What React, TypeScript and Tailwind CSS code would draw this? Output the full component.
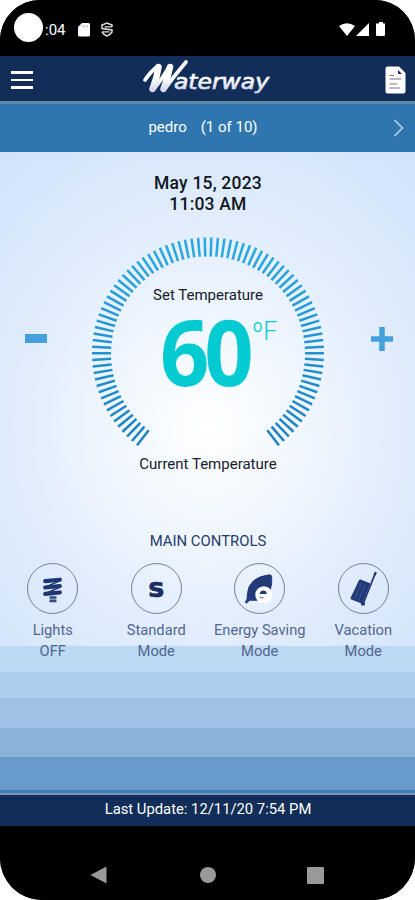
import { ReactNode } from "react"

interface IControl {
  label: string
  value: string
  icon: ReactNode
}

const TICKS = 88
const START = -142.3
const SWEEP = 284.6

const Logo = () => (
  <svg width="134" height="44" viewBox="0 0 134 44">
    <defs>
      <linearGradient id="chrome" x1="0" y1="4" x2="0" y2="38" gradientUnits="userSpaceOnUse">
        <stop offset="0" stopColor="#ffffff" />
        <stop offset="0.55" stopColor="#ffffff" />
        <stop offset="1" stopColor="#c3c8e6" />
      </linearGradient>
    </defs>
    <g fill="none" stroke="url(#chrome)" strokeLinecap="round" strokeLinejoin="round">
      <path d="M4 24Q10 15 17 10M13 33Q22 22 28 11M24 33Q33 20 45 6" strokeWidth="3.8" />
      <path d="M17.500 11Q16 22 11.500 33M29 11Q27 22 22.500 33" strokeWidth="6.500" />
    </g>
    <text
      x="33"
      y="33"
      textLength="95"
      lengthAdjust="spacingAndGlyphs"
      fill="url(#chrome)"
      stroke="url(#chrome)"
      strokeWidth="0.7"
      fontSize="21.5"
      fontStyle="italic"
      fontFamily="DejaVu Sans, sans-serif"
    >
      aterway
    </text>
  </svg>
)

const StatusBar = () => (
  <div className="flex h-[56px] items-start justify-between bg-black pl-[14px] pr-[28px] pt-[13px]">
    <div className="flex items-start">
      <div className="h-[29px] w-[29px] rounded-full bg-white"></div>
      <span className="ml-[2px] mt-[7px] text-[15px] leading-[20px] text-white">:04</span>
      <svg className="ml-[12px] mt-[10px]" width="12" height="14" viewBox="0 0 12 14">
        <path d="M4 0H10.5Q12 0 12 1.5V12Q12 13.5 10.5 13.5H1.5Q0 13.5 0 12V4Z" fill="#fff" />
        <path d="M4.5 2V4.5M6.8 2V4.5M9.2 2V4.5" stroke="#999" strokeWidth="0.7" />
      </svg>
      <svg className="ml-[11px] mt-[9px]" width="12" height="15" viewBox="0 0 12 15">
        <path d="M11 5V3L6 1L1 3V6.500L11 8V10Q9 13 6 14Q3 13 1 10" fill="none" stroke="#ddd" strokeWidth="1.500" />
        <path d="M3.500 4.800H11M1 9.800H8.500" stroke="#ddd" strokeWidth="1.200" />
      </svg>
    </div>
    <svg className="mt-[9px]" width="48" height="15" viewBox="0 0 48 15">
      <g fill="#fff">
        <path d="M0 4Q8 -1.500 16 4L8 14Z" />
        <path d="M17 14L30 1V14Z" />
        <path d="M40 0H44V1.500H46V13Q46 14 45 14H38Q37 14 37 13V1.500H40Z" />
      </g>
    </svg>
  </div>
)

const Header = () => (
  <div className="flex h-[45px] items-center justify-between bg-[#122d57] pl-[11px] pr-[9px] pt-[3px]">
    <div className="flex w-[22px] flex-col gap-[5px]">
      <div className="h-[2.5px] bg-white"></div>
      <div className="h-[2.5px] bg-white"></div>
      <div className="h-[2.5px] bg-white"></div>
    </div>
    <div className="-mt-[4px] mr-[2px]">
      <Logo />
    </div>
    <svg width="21" height="28" viewBox="0 0 21 28">
      <path d="M2.500 0.500H14L20.500 7V25.500Q20.500 27.500 18.500 27.500H2.500Q0.500 27.500 0.500 25.500V2.500Q0.500 0.500 2.500 0.500Z" fill="#fff" />
      <path d="M13 4V8H17Z" fill="#122d57" />
      <path d="M4.500 9.500H9M4.500 13H16.500M4.500 18H12.500M4.500 22H15" stroke="#777786" strokeWidth="1.2" />
    </svg>
  </div>
)

const Gauge = () => (
  <div className="relative h-[210px] w-[234px]">
    <svg className="absolute inset-0" width="234" height="210" viewBox="0 0 234 210">
      <defs>
        <linearGradient id="ring" x1="0" y1="0" x2="0" y2="210" gradientUnits="userSpaceOnUse">
          <stop offset="0" stopColor="#29aae2" />
          <stop offset="1" stopColor="#1b7fc4" />
        </linearGradient>
      </defs>
      <g stroke="url(#ring)" strokeWidth="2.5">
        {Array.from({ length: TICKS }, (_, index) => {
          const angle = ((START + (SWEEP * index) / (TICKS - 1)) * Math.PI) / 180
          const x = Math.sin(angle)
          const y = -Math.cos(angle)
          return (
            <line
              key={index}
              x1={117 + x * 97}
              y1={117.4 + y * 97}
              x2={117 + x * 116}
              y2={117.4 + y * 116}
            />
          )
        })}
      </g>
    </svg>
    <div className="relative pt-[49px] text-center text-[15px] leading-[20px] text-[#17202c]">
      Set Temperature
    </div>
    <div className="relative flex items-start pl-[69px] text-[#04cbd2]">
      <span className="mt-[10px] w-[92px] origin-left scale-x-[0.94] font-['Open_Sans',sans-serif] text-[92px] font-bold leading-[72px] tracking-[-5.5px]">
        60
      </span>
      <span className="mt-[11px] text-[25px] font-light leading-[32px]">ºF</span>
    </div>
  </div>
)

const controls: IControl[] = [
  {
    label: "Lights",
    value: "OFF",
    icon: (
      <svg width="50" height="50" viewBox="0 0 50 50">
        <g stroke="#1e3672" strokeLinecap="round" fill="none">
          <path d="M17.500 17L32.500 15.500M17.500 23.500L32.500 22M17.500 30L32.500 28.500" strokeWidth="4.200" />
          <path d="M33 16.500L18 23M33 23L18 29.500" strokeWidth="1.500" />
        </g>
        <path d="M22 32.500H29V35H22ZM22 35.700H29V38.500H22Z" fill="#344a80" />
      </svg>
    ),
  },
  {
    label: "Standard",
    value: "Mode",
    icon: (
      <span className="-mt-[2px] font-['DejaVu_Sans',sans-serif] text-[27px] font-bold leading-[40px] text-[#1b2c63] [-webkit-text-stroke:0.6px_#1b2c63]">
        s
      </span>
    ),
  },
  {
    label: "Energy Saving",
    value: "Mode",
    icon: (
      <svg width="50" height="50" viewBox="0 0 50 50">
        <path d="M10.500 38.500Q13 36 12.500 31Q13.500 13 35 10.500Q37.500 10.500 37.500 13Q38 19 36 26L23 36.500H15L11.500 39.500Z" fill="#223b78" stroke="#223b78" strokeWidth="1" />
        <circle cx="29.500" cy="31" r="8.800" fill="#fff" />
        <path d="M25 30Q26 26.500 29 26.500Q32 26.500 32.500 30Z" fill="#223b78" />
        <path d="M25.500 33Q27 34.500 29 34" stroke="#223b78" strokeWidth="1" fill="none" />
      </svg>
    ),
  },
  {
    label: "Vacation",
    value: "Mode",
    icon: (
      <svg width="50" height="50" viewBox="0 0 50 50">
        <path d="M21.500 16.500L30.500 20L23 38.500L13 34.500Z" fill="#223b78" stroke="#223b78" strokeWidth="2.500" strokeLinejoin="round" />
        <path d="M37 9L25 39" stroke="#223b78" strokeWidth="1.800" strokeLinecap="round" />
        <path d="M36.500 10L37.200 8.700" stroke="#223b78" strokeWidth="2.500" strokeLinecap="round" />
        <path d="M22.500 19L16 35M26.500 20.500L20 37" stroke="#5b6e9d" strokeWidth="0.500" />
        <circle cx="24.500" cy="40" r="2.200" fill="#223b78" />
      </svg>
    ),
  },
]

const Control = ({ label, value, icon }: IControl) => (
  <div className="flex flex-col items-center">
    <div className="flex h-[51px] w-[51px] items-center justify-center rounded-full border border-[#747f9e]">
      {icon}
    </div>
    <div className="mt-[6px] whitespace-nowrap text-center text-[14.7px] leading-[21px] text-[#52668f]">
      {label}
      <br />
      {value}
    </div>
  </div>
)

const App = () => (
  <div className="h-[900px] w-[415px] overflow-hidden bg-white">
    <div className="flex h-[900px] flex-col overflow-hidden rounded-b-[42px] rounded-t-[40px] bg-black font-[Roboto,sans-serif]">
      <StatusBar />
      <Header />
      <div className="grid h-[51px] grid-cols-[1fr_auto_1fr] items-center border-t-[3px] border-[#6089a9] bg-[#2f76af] text-[15px] text-white">
        <span></span>
        <div className="flex gap-[14px] pb-px pr-[9px]">
          <span>pedro</span>
          <span>(1 of 10)</span>
        </div>
        <svg className="mr-[11px] justify-self-end" width="11" height="18" viewBox="0 0 11 18">
          <path d="M1.500 1L9.500 9L1.500 17" fill="none" stroke="#b8d6ef" strokeWidth="1.500" />
        </svg>
      </div>

      <div className="relative h-[638px] bg-[radial-gradient(ellipse_360px_400px_at_50%_275px,#ffffff_0%,#eff6fe_28%,#e0ecfc_55%,#cbe1fa_100%)]">
        <div className="absolute inset-x-0 bottom-0 flex flex-col">
          <div className="h-[26px] bg-[#bcd9f4]"></div>
          <div className="h-[26px] bg-[#abceed]"></div>
          <div className="h-[30px] bg-[#9fc1e5]"></div>
          <div className="h-[29px] bg-[#8ab3d9]"></div>
          <div className="h-[33px] bg-[#689bcc]"></div>
        </div>

        <div className="relative flex flex-col">
          <div className="pl-px pt-[21px] text-center text-[17.5px] font-medium leading-[21px] tracking-[0.2px] text-[#101722]">
            May 15, 2023
            <br />
            11:03 AM
          </div>
          <div className="mt-[21px] flex items-start justify-between pl-[25px] pr-[22px]">
            <div className="mt-[98px] h-[9px] w-[22px] bg-[#459fdc]"></div>
            <div className="mr-[2px]">
              <Gauge />
            </div>
            <svg className="mt-[91px]" width="22" height="24" viewBox="0 0 22 24">
              <path d="M0 12H22M11 0V24" stroke="#459fdc" strokeWidth="5.500" />
            </svg>
          </div>
          <div className="mt-[8px] pl-px text-center text-[15px] leading-[20px] text-[#17202c]">
            Current Temperature
          </div>
          <div className="mt-[57px] pl-px text-center text-[14.9px] leading-[20px] text-[#273c69]">
            MAIN CONTROLS
          </div>
          <div className="mt-[12px] grid grid-cols-4 pl-px">
            {controls.map((control) => (
              <Control key={control.label} {...control} />
            ))}
          </div>
        </div>
      </div>

      <div className="h-[36px] border-t-[3px] border-[#3a80b7]">
        <div className="h-[33px] border-t-2 border-[#8395b2] bg-[#122d57] pl-px text-center text-[14.8px] leading-[29px] text-white">
          Last Update: 12/11/20 7:54 PM
        </div>
      </div>

      <div className="flex flex-1 items-center justify-between bg-black pb-0 pl-[90px] pr-[91px] pt-[24px]">
        <svg width="17" height="18" viewBox="0 0 17 18">
          <path d="M0.500 9L16.500 0.500V17.500Z" fill="#999" />
        </svg>
        <div className="ml-px h-[16px] w-[16px] rounded-full bg-[#999]"></div>
        <div className="h-[17px] w-[17px] rounded-[1px] bg-[#999]"></div>
      </div>
    </div>
  </div>
)

export default App
